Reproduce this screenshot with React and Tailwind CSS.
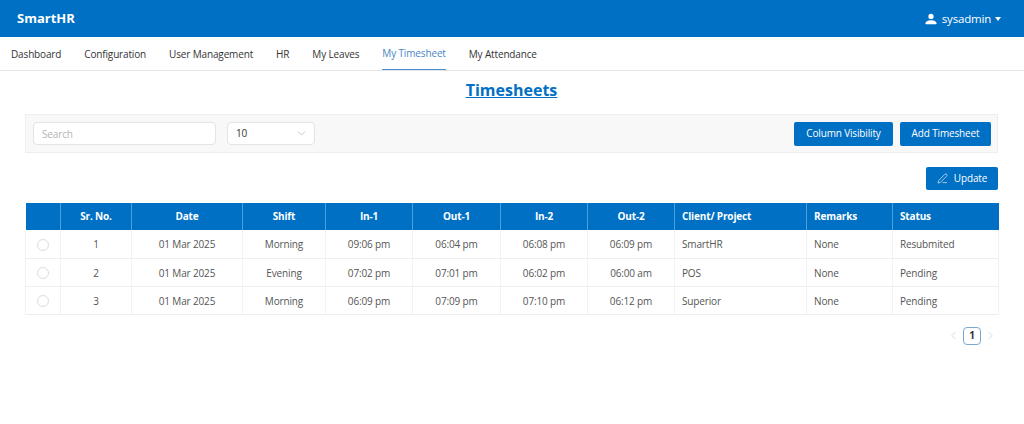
import React from "react";
import { ChevronDown, ChevronLeft, ChevronRight, PenLine } from "lucide-react";

const tabs = ["Dashboard", "Configuration", "User Management", "HR", "My Leaves", "My Timesheet", "My Attendance"];

const columns = [
  { label: "", width: "w-[35px]" },
  { label: "Sr. No.", width: "w-[71px]" },
  { label: "Date", width: "w-[111px]" },
  { label: "Shift", width: "w-[83px]" },
  { label: "In-1", width: "w-[87px]" },
  { label: "Out-1", width: "w-[88px]" },
  { label: "In-2", width: "w-[87px]" },
  { label: "Out-2", width: "w-[87px]" },
  { label: "Client/ Project", width: "w-[132px]", left: true },
  { label: "Remarks", width: "w-[86px]", left: true },
  { label: "Status", width: "w-[106px]", left: true },
];

const rows = [
  ["1", "01 Mar 2025", "Morning", "09:06 pm", "06:04 pm", "06:08 pm", "06:09 pm", "SmartHR", "None", "Resubmited"],
  ["2", "01 Mar 2025", "Evening", "07:02 pm", "07:01 pm", "06:02 pm", "06:00 am", "POS", "None", "Pending"],
  ["3", "01 Mar 2025", "Morning", "06:09 pm", "07:09 pm", "07:10 pm", "06:12 pm", "Superior", "None", "Pending"],
];

function App() {
  return (
    <div className="min-h-[424px] bg-white font-['Open_Sans','Noto_Sans',sans-serif] text-[10px] tracking-[-0.15px] text-[#333]">
      {/* header */}
      <div className="flex h-[37px] items-center justify-between bg-[#0070c4] pl-[17px] pr-[23px] text-white">
        <p className="text-[13px] font-bold tracking-normal">SmartHR</p>
        <div className="flex items-center">
          <svg viewBox="0 0 16 16" fill="white" className="mr-[5px] h-[12px] w-[12px]">
            <path d="M8 8a3.500 3.500 0 1 0 0-7 3.500 3.500 0 0 0 0 7zM1.500 15c-.6 0-1-.4-1-1 0-2.500 3-4.500 7.500-4.500s7.500 2 7.500 4.500c0 .6-.4 1-1 1z" />
          </svg>
          <span className="text-[11.500px] tracking-[-0.2px]">sysadmin</span>
          <span className="ml-[4px] h-0 w-0 border-x-[3.500px] border-t-[4px] border-x-transparent border-t-white" />
        </div>
      </div>

      {/* tabs */}
      <div className="flex h-[34px] gap-[23px] border-b border-[#e4e4e4] pl-[11px]">
        {tabs.map((tab) =>
          tab === "My Timesheet" ? (
            <a key={tab} className="flex items-center border-b border-[#4a90d0] pt-[1px] text-[#4a86c5]">
              {tab}
            </a>
          ) : (
            <a key={tab} className="flex items-center pt-[1px] text-[#333]">
              {tab}
            </a>
          )
        )}
      </div>

      <div className="px-[25px] pr-[26px]">
        <h1 className="mt-[7px] text-center text-[16px] leading-[24px] font-bold tracking-normal text-[#0070c4] underline">Timesheets</h1>

        {/* toolbar */}
        <div className="mt-[12px] flex h-[39px] items-center justify-between border border-[#eeeeee] bg-[#f8f8f8] pl-[7px] pr-[6px]">
          <div className="flex items-center gap-[11px]">
            <input
              placeholder="Search"
              className="h-[23px] w-[183px] rounded-[4px] border border-[#e4e4e4] bg-white px-2 text-[10px] outline-none placeholder:text-[#b5b5b5]"
            />
            <div className="flex h-[23px] w-[88px] items-center justify-between rounded-[4px] border border-[#e4e4e4] bg-white pl-2 pr-[6px]">
              <span>10</span>
              <ChevronDown size={13} strokeWidth={1.2} className="text-[#aaa]" />
            </div>
          </div>
          <div className="flex gap-[7px]">
            <button className="h-[24px] w-[99px] rounded-[2px] bg-[#0070c4] text-white">Column Visibility</button>
            <button className="h-[24px] w-[91px] rounded-[2px] bg-[#0070c4] text-white">Add Timesheet</button>
          </div>
        </div>

        <div className="mt-[14px] flex justify-end">
          <button className="flex h-[23px] w-[72px] items-center justify-center gap-[6px] rounded-[2px] bg-[#0070c4] text-white">
            <PenLine size={11} strokeWidth={1.4} />
            Update
          </button>
        </div>

        {/* table */}
        <table className="mt-[13px] w-[973px] table-fixed border-collapse">
          <thead>
            <tr className="h-[27px] bg-[#0070c4] text-white">
              {columns.map((col, i) => (
                <th
                  key={i}
                  className={`${col.width} border-x border-[#4b9fdc] px-[7px] font-bold first:border-l-0 last:border-r-0 ${col.left ? "text-left" : "text-center"}`}
                >
                  {col.label}
                </th>
              ))}
            </tr>
          </thead>
          <tbody>
            {rows.map((row) => (
              <tr key={row[0]} className="h-[28px] border-b border-[#eeeeee]">
                <td className="border-x border-[#f2f2f2] pt-[2px] text-center">
                  <span className="mx-auto block h-[12px] w-[12px] rounded-full border border-[#dddddd]" />
                </td>
                {row.map((cell, i) => (
                  <td key={i} className={`border-x border-[#f2f2f2] px-[7px] pt-[2px] text-[#555] ${i >= 7 ? "text-left" : "text-center"}`}>
                    {cell}
                  </td>
                ))}
              </tr>
            ))}
          </tbody>
        </table>

        {/* pagination */}
        <div className="mt-[12px] flex items-center justify-end gap-[3px] pr-[1px]">
          <ChevronLeft size={13} strokeWidth={1.2} className="text-[#c4c4c4]" />
          <span className="flex h-[18px] w-[18px] items-center justify-center rounded-[4px] border border-[#7ba9cf] font-bold">1</span>
          <ChevronRight size={13} strokeWidth={1.2} className="text-[#c4c4c4]" />
        </div>
      </div>
    </div>
  );
}

export default App;
